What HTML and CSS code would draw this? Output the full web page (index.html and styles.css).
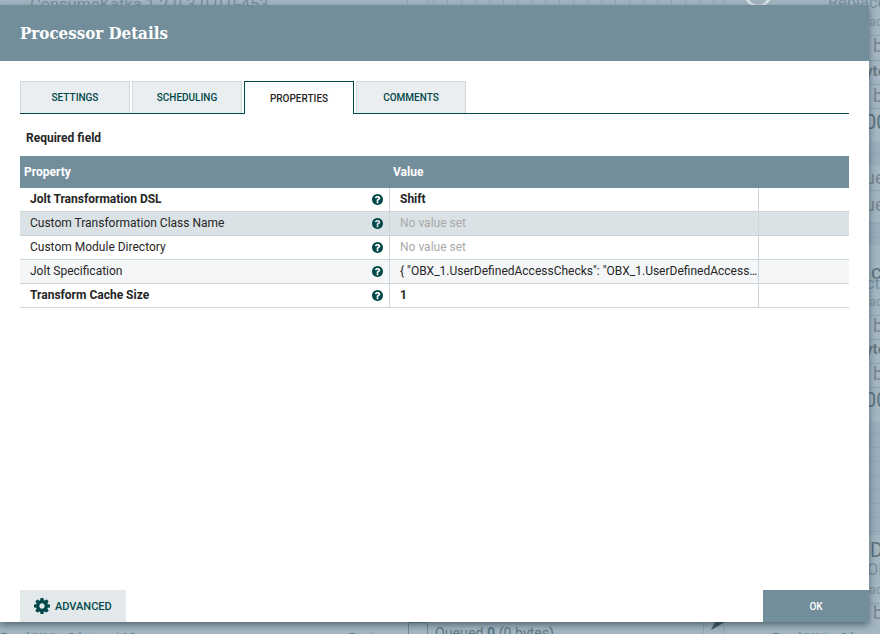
FILE: index.html
```html
<!DOCTYPE html>
<html lang="en">
<head>
<meta charset="utf-8">
<title>Processor Details</title>
<link rel="stylesheet" href="styles.css">
</head>
<body>
<svg class="canvas" width="880" height="634" viewBox="0 0 880 634" aria-hidden="true">
  <defs>
    <pattern id="grid" width="14" height="14" patternUnits="userSpaceOnUse">
      <path class="grid-line" d="M13.5 0V14M0 13.5H14"/>
    </pattern>
  </defs>
  <rect class="band" x="869" y="142" width="11" height="23"/>
  <rect class="band" x="869" y="222" width="11" height="23"/>
  <rect class="band" x="869" y="422" width="11" height="113"/>
  <rect class="gridded" x="428" y="0" width="295" height="6"/>
  <rect class="gridded" x="869" y="142" width="11" height="23"/>
  <rect class="gridded" x="869" y="222" width="11" height="23"/>
  <rect class="gridded" x="869" y="422" width="11" height="113"/>
  <rect class="rule" x="869" y="35" width="11" height="1"/>
  <rect class="rule" x="869" y="60" width="11" height="1"/>
  <rect class="rule" x="869" y="84" width="11" height="1"/>
  <rect class="rule" x="869" y="108" width="11" height="1"/>
  <rect class="rule" x="869" y="190" width="11" height="1"/>
  <rect class="rule" x="869" y="315" width="11" height="1"/>
  <rect class="rule" x="869" y="339" width="11" height="1"/>
  <rect class="rule" x="869" y="363" width="11" height="1"/>
  <rect class="rule" x="869" y="387" width="11" height="1"/>
  <rect class="rule" x="869" y="603" width="11" height="1"/>
  <rect class="rule" x="407" y="0" width="1" height="6"/>
  <rect class="rule" x="428" y="0" width="1" height="6"/>
  <rect class="rule" x="723" y="0" width="1" height="6"/>
  <rect class="box" x="408.5" y="622.5" width="19" height="14"/>
  <rect class="rule" x="703" y="622" width="1" height="12"/>
  <rect class="rule" x="723" y="622" width="1" height="12"/>
  <polygon class="tri" points="711,630 715,622 725,622"/>
  <text class="t-name" x="30" y="10">ConsumeKafka 1.2.0.3.0.0.0-453</text>
  <circle class="ring" cx="758" cy="-6" r="12"/>
  <text class="t-name" x="828" y="8">Replace</text>
  <text class="t-sub" x="869" y="26">ac</text>
  <text class="t-big" x="873" y="52">b</text>
  <text class="t-bold" x="865" y="76">yte</text>
  <text class="t-big" x="873" y="102">b</text>
  <text class="t-huge" x="865" y="129">00</text>
  <text class="t-big" x="865" y="184">ue</text>
  <text class="t-big" x="865" y="211">ue</text>
  <text class="t-huge" x="871" y="279">c</text>
  <text class="t-name" x="866" y="289">ct</text>
  <text class="t-sub" x="869" y="306">ac</text>
  <text class="t-big" x="873" y="332">b</text>
  <text class="t-bold" x="865" y="354">yte</text>
  <text class="t-big" x="873" y="380">b</text>
  <text class="t-huge" x="865" y="407">00</text>
  <text class="t-huge" x="870" y="557">D</text>
  <text class="t-name" x="867" y="575">OF</text>
  <text class="t-sub" x="869" y="594">ac</text>
  <text class="t-big" x="873" y="619">b</text>
  <text class="t-row" x="0" y="642">Read/Write 0 bytes / 10s</text>
  <text class="t-row" x="348" y="642">5 min</text>
  <text class="t-queue" x="435" y="638">Queued <tspan class="t-strong">0</tspan> (0 bytes)</text>
  <text class="t-row" x="772" y="642">Read/Write 0 b</text>
</svg>

<div class="dialog" role="dialog" aria-labelledby="dialog-title">
  <header class="dialog-head">
    <h1 class="dialog-title" id="dialog-title">Processor Details</h1>
  </header>
  <div class="dialog-body">
    <nav class="tabs">
      <div class="tab">Settings</div>
      <div class="tab">Scheduling</div>
      <div class="tab tab-active">Properties</div>
      <div class="tab">Comments</div>
    </nav>
    <p class="required">Required field</p>
    <div class="table">
      <div class="row row-head">
        <div class="cell-head cell-head-name">Property</div>
        <div class="cell-head">Value</div>
      </div>
      <div class="row">
        <div class="cell cell-name strong"><span>Jolt Transformation DSL</span>
          <svg class="help" viewBox="0 0 1536 1536"><use href="#q"/></svg></div>
        <div class="cell cell-value strong">Shift</div>
        <div class="cell cell-extra"></div>
      </div>
      <div class="row row-selected">
        <div class="cell cell-name"><span>Custom Transformation Class Name</span>
          <svg class="help" viewBox="0 0 1536 1536"><use href="#q"/></svg></div>
        <div class="cell cell-value unset">No value set</div>
        <div class="cell cell-extra"></div>
      </div>
      <div class="row">
        <div class="cell cell-name"><span>Custom Module Directory</span>
          <svg class="help" viewBox="0 0 1536 1536"><use href="#q"/></svg></div>
        <div class="cell cell-value unset">No value set</div>
        <div class="cell cell-extra"></div>
      </div>
      <div class="row row-alt">
        <div class="cell cell-name"><span>Jolt Specification</span>
          <svg class="help" viewBox="0 0 1536 1536"><use href="#q"/></svg></div>
        <div class="cell cell-value">{ "OBX_1.UserDefinedAccessChecks": "OBX_1.UserDefinedAccessChecks" }</div>
        <div class="cell cell-extra"></div>
      </div>
      <div class="row">
        <div class="cell cell-name strong"><span>Transform Cache Size</span>
          <svg class="help" viewBox="0 0 1536 1536"><use href="#q"/></svg></div>
        <div class="cell cell-value strong">1</div>
        <div class="cell cell-extra"></div>
      </div>
    </div>
    <footer class="dialog-foot">
      <button class="btn btn-advanced" type="button">
        <svg class="gear" viewBox="0 0 1536 1536"><path d="M1024 768q0-106-75-181t-181-75-181 75-75 181 75 181 181 75 181-75 75-181zm512-109v222q0 12-8 23t-20 13l-185 28q-19 54-39 91 35 50 107 138 10 12 10 25t-9 23q-27 37-99 108t-94 71q-12 0-26-9l-138-108q-44 23-91 38-16 136-29 186-7 28-36 28h-222q-14 0-24.5-8.5t-11.5-21.5l-28-184q-49-16-90-37l-141 107q-10 9-25 9-14 0-25-11-126-114-165-168-7-10-7-23 0-12 8-23 15-21 51-66.5t54-70.5q-27-50-41-99l-183-27q-13-2-21-12.5t-8-23.5v-222q0-12 8-23t19-13l186-28q14-46 39-92-40-57-107-138-10-12-10-24 0-10 9-23 26-36 98.5-107.5t94.5-71.5q13 0 26 10l138 107q44-23 91-38 16-136 29-186 7-28 36-28h222q14 0 24.5 8.5t11.5 21.5l28 184q49 16 90 37l142-107q9-9 24-9 13 0 25 10 129 119 165 170 7 8 7 22 0 12-8 23-15 21-51 66.5t-54 70.5q26 50 41 98l183 28q13 2 21 12.5t8 23.5z"/></svg>
        <span>Advanced</span>
      </button>
      <button class="btn btn-ok" type="button">OK</button>
    </footer>
  </div>
</div>

<svg class="defs" width="0" height="0" aria-hidden="true">
  <symbol id="q" viewBox="0 0 1536 1536"><path d="M896 1248v-192q0-14-9-23t-23-9h-192q-14 0-23 9t-9 23v192q0 14 9 23t23 9h192q14 0 23-9t9-23zm256-672q0-88-55.5-163t-138.5-116-170-41q-243 0-371 213-15 24 8 42l132 100q7 6 19 6 16 0 25-12 53-68 86-92 34-24 86-24 48 0 85.5 26t37.5 59q0 38-20 61t-68 45q-63 28-115.5 86.5t-52.5 125.5v36q0 14 9 23t23 9h192q14 0 23-9t9-23q0-19 21.5-49.5t54.5-49.5q32-18 49-28.5t46-35 44.5-48 28-60.5 12.5-81zm384 192q0 209-103 385.5t-279.5 279.5-385.5 103-385.5-103-279.5-279.5-103-385.5 103-385.5 279.5-279.5 385.5-103 385.5 103 279.5 279.5 103 385.5z"/></symbol>
</svg>
</body>
</html>
```
FILE: styles.css
```css
* { box-sizing: border-box; }

html, body {
  margin: 0;
  height: 100%;
  overflow: hidden;
}

body {
  background: #a3b6c1;
  font-family: Roboto, "Liberation Sans", sans-serif;
  color: #262626;
}

/* Dimmed flow canvas behind the dialog */
.canvas {
  position: absolute;
  left: 0;
  top: 0;
  font-family: Roboto, "Liberation Sans", sans-serif;
}
.defs { position: absolute; }
.band { fill: #9aafbb; }
.gridded { fill: url(#grid); }
.grid-line { fill: none; stroke: #92a8b4; stroke-width: 1; }
.rule { fill: #90a6b2; }
.box { fill: none; stroke: #6f8794; }
.tri { fill: #3c5561; }
.ring { fill: none; stroke: #d9e1e5; stroke-width: 3; }
.t-name { font-size: 16.4px; fill: #7890a0; }
.t-sub { font-size: 13px; fill: #7f949f; }
.t-big { font-size: 18px; fill: #76858e; }
.t-bold { font-size: 15px; font-weight: 700; fill: #6c7b84; }
.t-huge { font-size: 20px; fill: #5f717b; }
.t-row { font-size: 13px; fill: #66808d; }
.t-queue { font-size: 14.2px; fill: #5f7884; }
.t-strong { font-weight: 700; }

/* Dialog */
.dialog {
  position: absolute;
  left: 0;
  top: 5px;
  width: 869px;
  height: 617px;
  display: flex;
  flex-direction: column;
  background: #fff;
  box-shadow: 0 3px 7px rgba(40, 60, 70, 0.65);
}

.dialog-head {
  flex: none;
  height: 56px;
  padding: 0 20px;
  display: flex;
  align-items: center;
  background: #728e9b;
}

.dialog-title {
  margin: 0;
  font-family: "DejaVu Serif", "Liberation Serif", serif;
  font-stretch: condensed;
  font-size: 16.8px;
  font-weight: 700;
  color: #fff;
}

.dialog-body {
  flex: 1;
  min-height: 0;
  display: flex;
  flex-direction: column;
  padding: 20px 0 0 20px;
}

/* Tabs */
.tabs {
  flex: none;
  width: 829px;
  height: 33px;
  display: flex;
  gap: 2px;
  border-bottom: 1px solid #004849;
}

.tab {
  width: 110px;
  height: 32px;
  display: flex;
  align-items: center;
  justify-content: center;
  background: #eaeef0;
  border: 1px solid #cfd8dc;
  border-bottom: 0;
  font-size: 10px;
  font-weight: 500;
  text-transform: uppercase;
  color: #004849;
}

.tab-active {
  height: 33px;
  background: #fff;
  border: 1px solid #004849;
  border-bottom: 0;
  color: #262626;
}

.required {
  flex: none;
  margin: 17px 0 11px 6px;
  height: 14px;
  line-height: 15px;
  font-size: 12px;
  font-weight: 700;
  color: #262626;
}

/* Table */
.table {
  flex: none;
  width: 829px;
  font-size: 12px;
  line-height: 23px;
}

.row {
  display: grid;
  grid-template-columns: 370px 369px 90px;
  height: 24px;
  border-bottom: 1px solid #ccd5d9;
}

.row-head {
  height: 32px;
  grid-template-columns: 369px 460px;
  background: #728e9b;
  border-bottom: 0;
  font-weight: 700;
  color: #fff;
}

.row-selected { background: #dbe2e5; }
.row-alt { background: #f4f6f7; }

.cell-head {
  display: flex;
  align-items: center;
  padding-left: 4px;
}

.cell {
  min-width: 0;
  display: flex;
  align-items: center;
  height: 23px;
}

.cell-name {
  justify-content: space-between;
  padding: 0 6.5px 0 10px;
  border-right: 1px solid #ccd5d9;
  color: #262626;
}

.cell-value {
  display: block;
  padding: 0 0 0 10px;
  white-space: nowrap;
  overflow: hidden;
  text-overflow: ellipsis;
  border-right: 1px solid #ccd5d9;
}

.strong { font-weight: 700; }
.unset { color: #aaa; }

.help {
  flex: none;
  width: 11px;
  height: 11px;
  fill: #004849;
}

/* Footer */
.dialog-foot {
  margin-top: auto;
  flex: none;
  height: 32px;
  display: flex;
  justify-content: space-between;
}

.btn {
  width: 106px;
  height: 32px;
  padding: 0;
  border: 0;
  display: flex;
  align-items: center;
  justify-content: center;
  font-family: inherit;
  font-size: 10px;
  font-weight: 500;
  text-transform: uppercase;
}

.btn-advanced {
  justify-content: flex-start;
  gap: 5px;
  padding-left: 14px;
  font-size: 11px;
  background: #e3e8eb;
  color: #004849;
}

.btn-ok {
  background: #728e9b;
  color: #fff;
}

.gear {
  width: 16px;
  height: 16px;
  fill: #004849;
}
```
